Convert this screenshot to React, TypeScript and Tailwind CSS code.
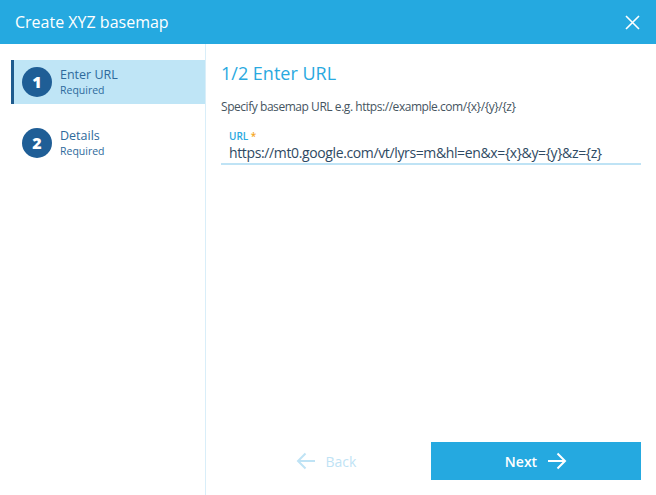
import React, { useState } from 'react'

const font = { fontFamily: '"Open Sans", "Liberation Sans", sans-serif' }

const steps = [
  { n: 1, title: 'Enter URL', sub: 'Required' },
  { n: 2, title: 'Details', sub: 'Required' },
]

const ArrowLeft = () => (
  <svg width="20" height="18" viewBox="0 0 20 18" fill="none" stroke="currentColor" strokeWidth="2">
    <path d="M19 9H2M9.5 1.5L2 9l7.5 7.5" />
  </svg>
)

const ArrowRight = () => (
  <svg width="20" height="18" viewBox="0 0 20 18" fill="none" stroke="currentColor" strokeWidth="2">
    <path d="M1 9h17M10.5 1.5L18 9l-7.5 7.5" />
  </svg>
)

const App: React.FC = () => {
  const [active] = useState(1)
  const [url, setUrl] = useState('https://mt0.google.com/vt/lyrs=m&hl=en&x={x}&y={y}&z={z}')

  return (
    <div className="w-[656px] h-[495px] flex flex-col bg-white overflow-hidden" style={font}>
      {/* Header */}
      <div className="h-[44px] shrink-0 bg-[#25a9e0] flex items-center justify-between pl-[15px] pr-[16px]">
        <h1 className="text-white text-[16px]">Create XYZ basemap</h1>
        <button className="text-white">
          <svg width="15" height="15" viewBox="0 0 15 15" stroke="currentColor" strokeWidth="1.6">
            <path d="M1 1l13 13M14 1L1 14" />
          </svg>
        </button>
      </div>

      <div className="flex flex-1 min-h-0">
        {/* Steps */}
        <div className="w-[206px] shrink-0 border-r border-[#d9eef9] pl-[11px] pt-[16px] flex flex-col gap-[17px]">
          {steps.map((s) => (
            <div
              key={s.n}
              className={
                'h-[44px] flex items-center gap-[8px] border-l-[3px] pl-[8px] ' +
                (s.n === active ? 'bg-[#bfe5f6] border-[#1f5b8e]' : 'border-transparent')
              }
            >
              <div className="w-[30px] h-[30px] rounded-full bg-[#1f5e96] text-white flex items-center justify-center text-[16px] font-extrabold">
                {s.n}
              </div>
              <div className="flex flex-col text-[#2e6a9c]">
                <span className="text-[12.5px] leading-[16px]">{s.title}</span>
                <span className="text-[10.5px] leading-[14px]">{s.sub}</span>
              </div>
            </div>
          ))}
        </div>

        {/* Main */}
        <div className="flex-1 flex flex-col px-[15px] pb-[15px]">
          <h2 className="text-[#29a9e0] text-[18px] mt-[16px] leading-[26px]">1/2 Enter URL</h2>
          <p className="text-[#46555f] text-[12px] tracking-[-0.45px] mt-[12px]">
            Specify basemap URL e.g. https://example.com/{'{x}'}/{'{y}'}/{'{z}'}
          </p>

          <div className="mt-[14px] flex flex-col border-b-2 border-[#bfe3f5]">
            <label className="text-[10px] leading-[12px] text-[#29a9e0] font-semibold pl-[8px]">
              URL <span className="text-[#f5a623]">*</span>
            </label>
            <input
              value={url}
              onChange={(e) => setUrl(e.target.value)}
              className="text-[14px] tracking-[-0.37px] leading-[21px] text-[#2f4a63] pl-[8px] outline-none bg-transparent"
            />
          </div>

          <div className="mt-auto grid grid-cols-2 h-[38px]">
            <button className="flex items-center justify-center gap-[10px] text-[#bfe3f5] text-[14px]" disabled>
              <ArrowLeft />
              Back
            </button>
            <button className="bg-[#25a9e0] text-white text-[14px] font-semibold flex items-center justify-center gap-[10px]">
              Next
              <ArrowRight />
            </button>
          </div>
        </div>
      </div>
    </div>
  )
}

export default App
